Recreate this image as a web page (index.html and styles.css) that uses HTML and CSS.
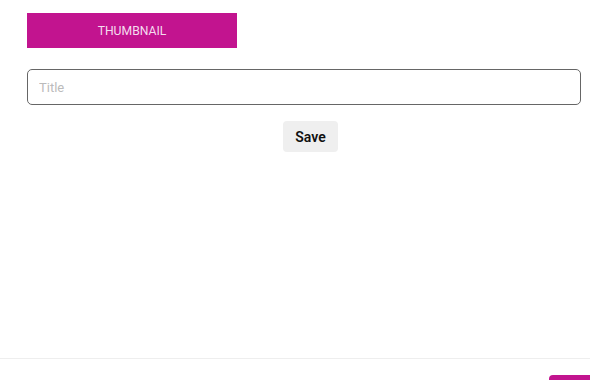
FILE: index.html
```html
<!doctype html>
<html>

<head>
	<title>Post</title>
	<link rel="stylesheet" href="styles.css">
</head>

<body>
	<div class="page">
		<form class="post-form">
			<div class="btn-thumb">THUMBNAIL</div>
			<input type="text" class="title-input" placeholder="Title">
			<div class="save-row">
				<div class="btn-save">Save</div>
			</div>
		</form>
		<div class="footer">
			<div class="btn-next"></div>
		</div>
	</div>
</body>

</html>
```

FILE: styles.css
```css
* { margin: 0; padding: 0; box-sizing: border-box; }
body { width: 590px; height: 380px; overflow: hidden; background: #fff; font-family: Roboto, 'Liberation Sans', sans-serif; }
.page { display: flex; flex-direction: column; height: 380px; }
.post-form { display: flex; flex-direction: column; align-items: flex-start; padding: 13px 9px 0 27px; flex: 1; }
.btn-thumb { width: 210px; height: 35px; display: flex; align-items: center; justify-content: center; background-color: #c2148f; color: #f4dcee; font-size: 12.2px; }
.title-input { width: 554px; height: 36px; margin-top: 21px; border: 1px solid #666; border-radius: 5px; padding: 0 11px; font-size: 13px; font-family: Roboto, 'Liberation Sans', sans-serif; outline: none; }
.title-input::placeholder { color: #bbb; }
.save-row { display: flex; width: 100%; justify-content: center; margin-top: 16px; padding-left: 13px; }
.btn-save { width: 55px; height: 31px; display: flex; align-items: center; justify-content: center; background-color: #efefef; border-radius: 4px; font-size: 14px; font-weight: 600; color: #111; }
.footer { height: 22px; border-top: 1px solid #eee; display: flex; justify-content: flex-end; align-items: flex-end; }
.btn-next { width: 41px; height: 5px; background-color: #c2148f; border-radius: 4px 0 0 0; }
```
